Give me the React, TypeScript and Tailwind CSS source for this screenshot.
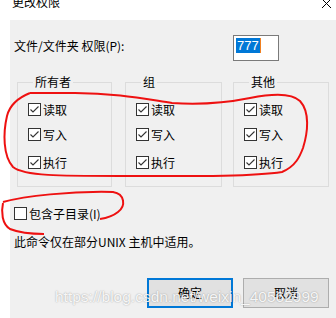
import React from "react";

const FONT = "font-['Microsoft_YaHei','Noto_Sans_CJK_SC',sans-serif]";

function Check({ checked }: { checked?: boolean }) {
  return (
    <span className="w-[13px] h-[13px] shrink-0 border border-[#333] bg-white flex items-center justify-center">
      {checked && (
        <svg width="11" height="11" viewBox="0 0 11 11">
          <path d="M1.5 5.5 L4 8 L9.5 2.5" fill="none" stroke="#333" strokeWidth="1.1" />
        </svg>
      )}
    </span>
  );
}

function Row({ label, checked, className = "" }: { label: string; checked?: boolean; className?: string }) {
  return (
    <div className={`flex items-center gap-[2px] h-[13px] ${className}`}>
      <Check checked={checked} />
      <span className="text-[12px] leading-[16px] text-black">{label}</span>
    </div>
  );
}

function Group({ title, className = "" }: { title: string; className?: string }) {
  return (
    <div className={`h-[105px] border border-[#dcdcdc] pl-[10px] ${className}`}>
      <div className="-mt-[8px] ml-[5px] w-fit bg-[#f0f0f0] px-[2px] text-[12px] leading-[14px] text-black">
        {title}
      </div>
      <Row label="读取" checked className="mt-[14px]" />
      <Row label="写入" checked className="mt-[12px]" />
      <Row label="执行" checked className="mt-[15px]" />
    </div>
  );
}

export default function App() {
  return (
    <div className={`relative w-[336px] h-[318px] overflow-hidden bg-white ${FONT}`}>
      <div className="h-[20px] flex items-start justify-between">
        <div className="ml-[12px] -mt-[5px] text-[12px] leading-[14px] text-black">更改权限</div>
        <svg width="11" height="10" viewBox="0 0 11 10" className="mr-[4px]">
          <path d="M1 -1 L10 8 M10 -1 L1 8" stroke="#000" strokeWidth="1" fill="none" />
        </svg>
      </div>

      <div className="ml-[10px] h-[298px] bg-[#f0f0f0] pt-[15px]">
        <div className="flex items-start pl-[4px]">
          <div className="mt-[3px] text-[12px] leading-[16px] text-black">文件/文件夹 权限(P):</div>
          <div className="ml-auto mr-[57px] w-[46px] h-[26px] border border-[#7a7a7a] bg-white pl-[2px] pt-[2px]">
            <div className="flex items-start">
              <span className="bg-[#0078d7] px-[1px] h-[15px] text-white text-[13px] leading-[15px] font-['Liberation_Sans',sans-serif]">
                777
              </span>
              <span className="w-[1px] h-[15px] bg-[#f08020]" />
            </div>
          </div>
        </div>

        <div className="flex mt-[21px] pl-[7px]">
          <Group title="所有者" className="w-[95px]" />
          <Group title="组" className="w-[97px] ml-[13px]" />
          <Group title="其他" className="w-[96px] ml-[11px]" />
        </div>

        <Row label="包含子目录(I)" className="mt-[20px] ml-[4px]" />

        <div className="mt-[14px] ml-[4px] text-[12px] leading-[16px] text-black">此命令仅在部分UNIX 主机中适用。</div>

        <div className="mt-[28px] flex justify-end gap-[10px] mr-[7px]">
          <button className="w-[86px] h-[30px] border-2 border-[#0078d7] bg-[#e1e1e1] text-[12px] text-black">确定</button>
          <button className="w-[86px] h-[30px] border border-[#adadad] bg-[#e1e1e1] text-[12px] text-black">取消</button>
        </div>
      </div>

      <div className="absolute left-[55px] top-[288px] text-[15.5px] leading-[18px] text-white/90 font-['Liberation_Sans',sans-serif] [text-shadow:0_0_1.5px_rgba(0,0,0,0.4)] pointer-events-none">
        https://blog.csdn.net/weixin_40562999
      </div>

      <svg className="absolute inset-0 pointer-events-none" width="336" height="318" viewBox="0 0 336 318">
        <path
          d="M30 93 C20 97 10 104 7 116 C3 133 3 156 13 167 C24 176 60 176 120 176 C180 176 250 177 282 172 C296 166 300 156 303 148 C308 132 310 112 300 101 C292 93 275 93 250 98 C225 103 200 105 172 103 C145 99 115 93 75 93 C55 93 40 93 30 93"
          fill="none"
          stroke="#ee1111"
          strokeWidth="2"
        />
        <path
          d="M3 202 C25 196 70 191 113 192 C125 194 126 206 118 212 C113 216 107 218 100 219 M3 203 C1 212 2 224 10 229 C20 233 32 234 44 234"
          fill="none"
          stroke="#ee1111"
          strokeWidth="2"
        />
      </svg>
    </div>
  );
}
